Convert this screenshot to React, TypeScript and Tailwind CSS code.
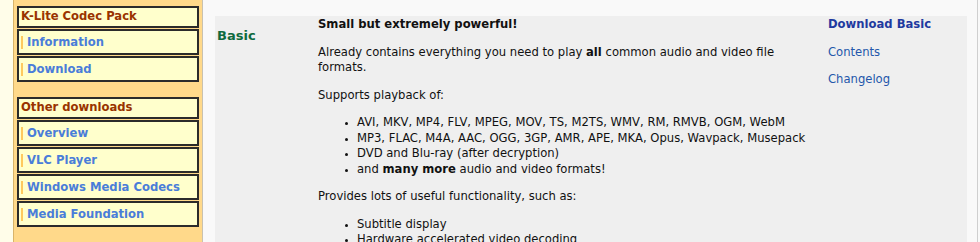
const sideGroups = [
  { title: "K-Lite Codec Pack", items: ["Information", "Download"] },
  {
    title: "Other downloads",
    items: ["Overview", "VLC Player", "Windows Media Codecs", "Media Foundation"],
  },
]

const videoFormats = "AVI, MKV, MP4, FLV, MPEG, MOV, TS, M2TS, WMV, RM, RMVB, OGM, WebM"
const audioFormats = "MP3, FLAC, M4A, AAC, OGG, 3GP, AMR, APE, MKA, Opus, Wavpack, Musepack"

function Sidebar() {
  return (
    <aside className="w-[190px] shrink-0 border-x border-l-[#d9b46a] border-r-[#c9c2b0] bg-[#ffd98a] px-[3px] pt-[6px]">
      {sideGroups.map((group, gi) => (
        <div key={group.title} className={gi > 0 ? "mt-[15px]" : ""}>
          {/* group title */}
          <div className="mb-[1px] flex h-[22px] items-center border-2 border-[#2b2b2b] bg-[#ffffcc] px-[2px] text-[11.6px] font-bold text-[#993300]">
            {group.title}
          </div>
          {group.items.map((item) => (
            <a
              key={item}
              href="#"
              className="mb-[1px] flex h-[26px] items-center border-2 border-[#2b2b2b] bg-[#ffffcc] px-[2px] text-[11.6px] font-bold text-[#4a7dd9]"
            >
              <span className="border-l-2 border-[#ffc95e] pl-[4px] leading-[13px]">{item}</span>
            </a>
          ))}
        </div>
      ))}
    </aside>
  )
}

function Bullets({ items }: { items: React.ReactNode[] }) {
  return (
    <ul className="my-[12px] list-disc pl-[39px] marker:text-[9px]">
      {items.map((it, i) => (
        <li key={i}>{it}</li>
      ))}
    </ul>
  )
}

export default function App() {
  return (
    <div className="flex h-[242px] w-[980px] overflow-hidden bg-[#f9f9f9] font-['DejaVu_Sans','Verdana',sans-serif] text-[11.6px] leading-[15.5px] text-[#111]">
      <div className="w-[13px] shrink-0 bg-[#fffde9]" />
      <Sidebar />

      <main className="w-[775px] shrink-0 border-r border-[#cfcfcf] pl-[12px] pr-[10px] pt-[16px]">
        <div className="grid h-full grid-cols-[103px_510px_1fr] bg-[#efefef] pt-[1px]">
          <h2 className="pl-[2px] pt-[11px] text-[13px] font-bold leading-[16px] text-[#0f6a3e]">Basic</h2>

          <div className="pr-[20px]">
            <p className="font-bold">Small but extremely powerful!</p>
            <p className="my-[12px]">
              Already contains everything you need to play <b>all</b> common audio and video file formats.
            </p>
            <p className="my-[12px]">Supports playback of:</p>
            <Bullets
              items={[
                videoFormats,
                audioFormats,
                "DVD and Blu-ray (after decryption)",
                <>
                  and <b>many more</b> audio and video formats!
                </>,
              ]}
            />
            <p className="my-[12px]">Provides lots of useful functionality, such as:</p>
            <Bullets items={["Subtitle display", "Hardware accelerated video decoding"]} />
          </div>

          <div>
            <p>
              <a href="#" className="font-bold text-[#1f3a9f]">
                Download Basic
              </a>
            </p>
            <p className="my-[12px]">
              <a href="#" className="text-[#2457ab]">
                Contents
              </a>
            </p>
            <p className="my-[12px]">
              <a href="#" className="text-[#2457ab]">
                Changelog
              </a>
            </p>
          </div>
        </div>
      </main>
    </div>
  )
}
